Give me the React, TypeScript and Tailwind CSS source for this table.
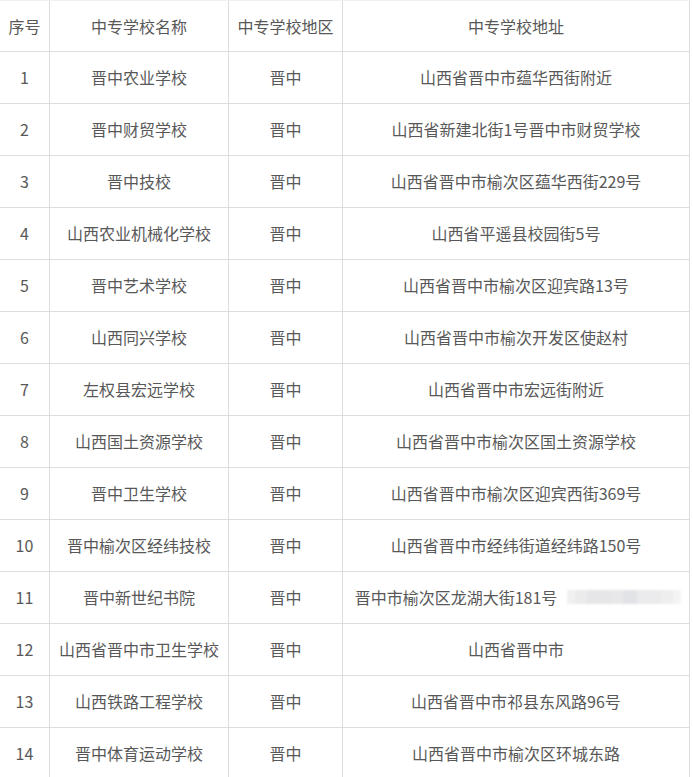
import React from "react";

const rows: [string, string, string, string][] = [
  ["1", "晋中农业学校", "晋中", "山西省晋中市蕴华西街附近"],
  ["2", "晋中财贸学校", "晋中", "山西省新建北街1号晋中市财贸学校"],
  ["3", "晋中技校", "晋中", "山西省晋中市榆次区蕴华西街229号"],
  ["4", "山西农业机械化学校", "晋中", "山西省平遥县校园街5号"],
  ["5", "晋中艺术学校", "晋中", "山西省晋中市榆次区迎宾路13号"],
  ["6", "山西同兴学校", "晋中", "山西省晋中市榆次开发区使赵村"],
  ["7", "左权县宏远学校", "晋中", "山西省晋中市宏远街附近"],
  ["8", "山西国土资源学校", "晋中", "山西省晋中市榆次区国土资源学校"],
  ["9", "晋中卫生学校", "晋中", "山西省晋中市榆次区迎宾西街369号"],
  ["10", "晋中榆次区经纬技校", "晋中", "山西省晋中市经纬街道经纬路150号"],
  ["11", "晋中新世纪书院", "晋中", "晋中市榆次区龙湖大街181号"],
  ["12", "山西省晋中市卫生学校", "晋中", "山西省晋中市"],
  ["13", "山西铁路工程学校", "晋中", "山西省晋中市祁县东风路96号"],
  ["14", "晋中体育运动学校", "晋中", "山西省晋中市榆次区环城东路"],
];

const cell =
  "flex items-center justify-center border-r border-b border-[#dddddd] text-[16px] text-[#585858]";

export default function App() {
  return (
    <div
      className="w-[693px] h-[777px] overflow-hidden bg-white"
      style={{ fontFamily: '"Noto Sans CJK SC", "Microsoft YaHei", sans-serif' }}
    >
      <div className="grid grid-cols-[50px_179px_114px_347px] w-[690px] border-t border-[#f0f0f0]">
        <div className={`${cell} h-[51px] pb-[1px]`}>序号</div>
        <div className={`${cell} h-[51px] pb-[1px]`}>中专学校名称</div>
        <div className={`${cell} h-[51px] pb-[1px]`}>中专学校地区</div>
        <div className={`${cell} h-[51px] pb-[1px]`}>中专学校地址</div>
        {rows.map((r) => (
          <React.Fragment key={r[0]}>
            <div className={`${cell} h-[52px] pb-[2px]`}>{r[0]}</div>
            <div className={`${cell} h-[52px] pb-[2px]`}>{r[1]}</div>
            <div className={`${cell} h-[52px] pb-[2px]`}>{r[2]}</div>
            <div className={`${cell} h-[52px] pb-[2px]`}>
              {r[0] === "11" ? (
                <span className="flex items-center ml-[4px]">
                  <span>{r[3]}</span>
                  <span className="ml-[10px] flex h-[14px] w-[114px] blur-[1px]">
                    <span className="w-[8px] bg-[#f0f0f0]" />
                    <span className="w-[12px] bg-[#ebebec]" />
                    <span className="w-[24px] bg-[#e6e6e8]" />
                    <span className="w-[12px] bg-[#e8e8ea]" />
                    <span className="w-[14px] bg-[#e2e3e6]" />
                    <span className="w-[24px] bg-[#ebebed]" />
                    <span className="w-[12px] bg-[#eeeeee]" />
                    <span className="w-[8px] bg-[#f4f4f4]" />
                  </span>
                </span>
              ) : (
                r[3]
              )}
            </div>
          </React.Fragment>
        ))}
      </div>
    </div>
  );
}
